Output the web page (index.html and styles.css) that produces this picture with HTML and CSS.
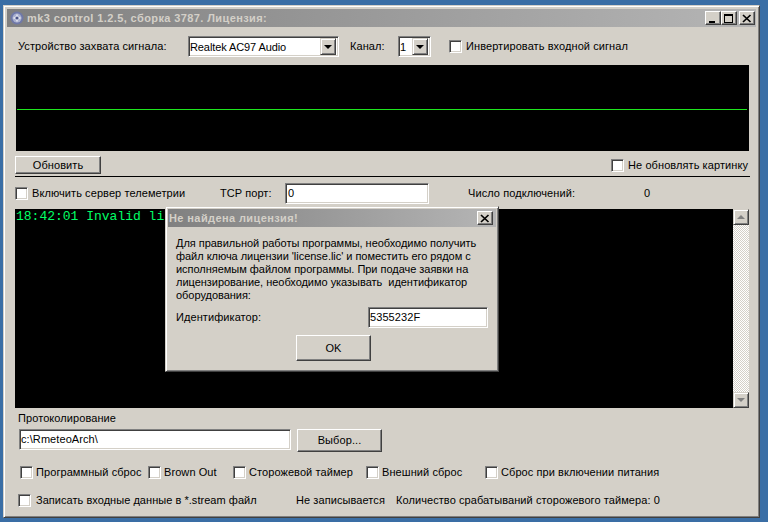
FILE: index.html
```html
<!DOCTYPE html>
<html lang="ru">
<head>
<meta charset="utf-8">
<title>mk3 control</title>
<link rel="stylesheet" href="styles.css">
</head>
<body>
<div class="window">
  <div class="titlebar">
    <svg class="app-icon" width="14" height="14" viewBox="0 0 14 14"><circle cx="7" cy="7" r="6.500" fill="#6f78a8"/><circle cx="7" cy="7" r="4.500" fill="#a9b0d0"/><path d="M7 2.500 8.200 5.600 11.500 7 8.200 8.400 7 11.500 5.800 8.400 2.500 7 5.800 5.600Z" fill="#e4e6f0"/><circle cx="7" cy="7" r="1.600" fill="#4a5488"/></svg>
    <span class="title-text">mk3 control 1.2.5, сборка 3787. Лицензия:</span>
    <div class="win-buttons">
      <button class="cap-btn"><svg width="10" height="9" viewBox="0 0 10 9"><rect x="1" y="7" width="6" height="2"/></svg></button>
      <button class="cap-btn"><svg width="10" height="9" viewBox="0 0 10 9"><path d="M0 0H9V9H0ZM1 2V8H8V2Z" fill-rule="evenodd"/></svg></button>
      <button class="cap-btn cap-close"><svg width="10" height="9" viewBox="0 0 10 9"><path d="M1 1 8.500 8M8.500 1 1 8" fill="none" stroke="#000" stroke-width="1.700"/></svg></button>
    </div>
  </div>

  <div class="row-device">
    <span class="lbl-device">Устройство захвата сигнала:</span>
    <div class="combo combo-device"><span class="combo-text">Realtek AC97 Audio</span><span class="combo-arrow"><i class="tri"></i></span></div>
    <span class="lbl-channel">Канал:</span>
    <div class="combo combo-channel"><span class="combo-text">1</span><span class="combo-arrow"><i class="tri"></i></span></div>
    <label class="check check-invert"><input type="checkbox">Инвертировать входной сигнал</label>
  </div>

  <div class="scope"><div class="scope-line"></div></div>

  <div class="row-update">
    <button class="btn btn-update">Обновить</button>
    <label class="check"><input type="checkbox">Не обновлять картинку</label>
  </div>
  <div class="separator"></div>

  <div class="row-telemetry">
    <label class="check check-server"><input type="checkbox">Включить сервер телеметрии</label>
    <span class="lbl-port">TCP порт:</span>
    <div class="field field-port">0</div>
    <span class="lbl-conn">Число подключений:</span>
    <span class="conn-value">0</span>
  </div>

  <div class="log">
    <div class="log-text">18:42:01 Invalid li</div>
    <div class="scrollbar">
      <span class="scroll-btn"><i class="tri tri-up"></i></span>
      <span class="scroll-track"></span>
      <span class="scroll-btn"><i class="tri tri-down"></i></span>
    </div>
  </div>

  <div class="lbl-log">Протоколирование</div>
  <div class="row-path">
    <div class="field field-path">c:\RmeteoArch\</div>
    <button class="btn btn-browse">Выбор...</button>
  </div>

  <div class="row-flags">
    <label class="check"><input type="checkbox">Программный сброс</label>
    <label class="check"><input type="checkbox">Brown Out</label>
    <label class="check"><input type="checkbox">Сторожевой таймер</label>
    <label class="check"><input type="checkbox">Внешний сброс</label>
    <label class="check"><input type="checkbox">Сброс при включении питания</label>
  </div>

  <div class="row-status">
    <label class="check"><input type="checkbox">Записать входные данные в *.stream файл</label>
    <span>Не записывается</span>
    <span>Количество срабатываний сторожевого таймера: 0</span>
  </div>

  <div class="dialog">
    <div class="dialog-title">
      <span class="title-text">Не найдена лицензия!</span>
      <button class="cap-btn cap-close"><svg width="10" height="9" viewBox="0 0 10 9"><path d="M1 1 8.500 8M8.500 1 1 8" fill="none" stroke="#000" stroke-width="1.700"/></svg></button>
    </div>
    <p class="dialog-text">Для правильной работы программы, необходимо получить<br>файл ключа лицензии 'license.lic' и поместить его рядом с<br>исполняемым файлом программы. При подаче заявки на<br>лицензирование, необходимо указывать &nbsp;идентификатор<br>оборудования:</p>
    <div class="dialog-id">
      <span>Идентификатор:</span>
      <div class="field field-id">5355232F</div>
    </div>
    <div class="dialog-actions"><button class="btn btn-ok">OK</button></div>
  </div>
</div>
</body>
</html>
```
FILE: styles.css
```css
* { box-sizing: border-box; }
html, body { margin: 0; padding: 0; height: 100%; overflow: hidden; }
body {
  background: #3a6ea5;
  font: 11px/13px "Liberation Sans", Arial, sans-serif;
  letter-spacing: .08px;
  color: #000;
}
.window {
  position: relative;
  width: 757px;
  height: 513px;
  margin: 5px 0 0 3px;
  padding: 3px;
  background: #d4d0c8;
  border: 1px solid;
  border-color: #d4d0c8 #404040 #404040 #d4d0c8;
  box-shadow: inset 1px 1px #fff, inset -1px -1px #808080;
}
.titlebar, .dialog-title {
  display: flex;
  align-items: center;
  background: linear-gradient(90deg, #808080, #b5b5b5);
}
.titlebar { height: 18px; padding: 0 1px 0 3px; }
.app-icon { flex: none; margin-right: 3px; }
.title-text {
  font-weight: bold;
  font-size: 11px;
  letter-spacing: .4px;
  color: #d4d0c8;
  white-space: nowrap;
}
.win-buttons { display: flex; margin-left: auto; }
.cap-btn {
  display: flex;
  align-items: center;
  justify-content: center;
  width: 16px;
  height: 14px;
  padding: 0;
  background: #d4d0c8;
  border: 1px solid;
  border-color: #fff #404040 #404040 #fff;
  box-shadow: inset -1px -1px #808080;
}
.cap-close { margin-left: 2px; }
.cap-btn svg { display: block; }

.row-device {
  display: flex;
  align-items: center;
  height: 21px;
  margin-top: 9px;
  padding-left: 11px;
}
.lbl-device { width: 170px; }
.lbl-channel { width: 48px; margin-left: 11px; }
.combo {
  display: flex;
  align-items: center;
  height: 21px;
  padding: 2px 2px 2px 1px;
  background: #fff;
  border: 1px solid;
  border-color: #808080 #fff #fff #808080;
  box-shadow: inset 1px 1px #404040, inset -1px -1px #d4d0c8;
}
.combo-device { width: 151px; }
.combo-channel { width: 33px; }
.combo-text { flex: 1; padding-top: 1px; letter-spacing: -.1px; white-space: nowrap; overflow: hidden; }
.combo-arrow {
  display: flex;
  align-items: center;
  justify-content: center;
  width: 16px;
  height: 17px;
  background: #d4d0c8;
  border: 1px solid;
  border-color: #d4d0c8 #404040 #404040 #d4d0c8;
  box-shadow: inset 1px 1px #fff, inset -1px -1px #808080;
}
.tri {
  display: block;
  width: 0;
  height: 0;
  border: 4px solid transparent;
  border-bottom-width: 0;
  border-top-color: #000;
}
.tri-up { border-width: 0 4px 4px; border-bottom-color: #808080; border-top-color: transparent; }
.tri-down { border-top-color: #808080; }

.check { display: flex; align-items: center; height: 14px; white-space: nowrap; }
.check input {
  appearance: none;
  flex: none;
  width: 13px;
  height: 13px;
  margin: 0 4px 0 0;
  background: #fff;
  border: 1px solid;
  border-color: #808080 #fff #fff #808080;
  box-shadow: inset 1px 1px #404040, inset -1px -1px #d4d0c8;
}
.check-invert { margin-left: 18px; }

.scope {
  width: 733px;
  height: 86px;
  margin: 8px 0 0 9px;
  padding: 44px 2px 0 1px;
  background: #000;
}
.scope-line { height: 1px; background: #1ee61e; }

.row-update {
  display: flex;
  align-items: center;
  justify-content: space-between;
  width: 733px;
  height: 18px;
  margin: 5px 0 0 8px;
}
.btn {
  padding: 0;
  font: inherit;
  letter-spacing: inherit;
  color: #000;
  background: #d4d0c8;
  border: 1px solid;
  border-color: #fff #404040 #404040 #fff;
  box-shadow: inset -1px -1px #808080;
}
.btn-update { width: 86px; height: 18px; }
.separator { width: 735px; height: 1px; margin: 2px 0 0 8px; background: #000; }

.row-telemetry {
  display: flex;
  align-items: center;
  height: 22px;
  margin: 5px 0 0 8px;
}
.check-server { width: 205px; }
.lbl-port { width: 65px; }
.field {
  display: flex;
  align-items: center;
  padding-left: 2px;
  background: #fff;
  border: 1px solid;
  border-color: #808080 #fff #fff #808080;
  box-shadow: inset 1px 1px #404040, inset -1px -1px #d4d0c8;
  white-space: nowrap;
}
.field-port { width: 144px; height: 21px; }
.lbl-conn { width: 176px; margin-left: 39px; }

.log {
  display: flex;
  width: 734px;
  height: 199px;
  margin: 5px 0 0 8px;
  background: #000;
}
.log-text {
  flex: 1;
  padding-left: 1px;
  font: 13px/15px "Liberation Mono", "Courier New", monospace;
  letter-spacing: 0;
  color: #00ff66;
  white-space: pre;
}
.scrollbar { display: flex; flex-direction: column; flex: none; width: 16px; }
.scroll-btn {
  display: flex;
  align-items: center;
  justify-content: center;
  flex: none;
  height: 16px;
  background: #d4d0c8;
  border: 1px solid;
  border-color: #d4d0c8 #404040 #404040 #d4d0c8;
  box-shadow: inset 1px 1px #fff, inset -1px -1px #808080;
}
.scroll-track {
  flex: 1;
  background: conic-gradient(#fff 25%, #d4d0c8 0 50%, #fff 0 75%, #d4d0c8 0) 0 0 / 2px 2px;
}

.lbl-log { height: 13px; margin: 4px 0 0 11px; }
.row-path {
  display: flex;
  align-items: flex-start;
  height: 23px;
  margin: 4px 0 0 12px;
}
.field-path { width: 272px; height: 21px; padding-left: 1px; }
.btn-browse { width: 85px; height: 23px; margin-left: 6px; }

.row-flags {
  display: grid;
  grid-template-columns: 128px 85px 133px 119px auto;
  justify-content: start;
  height: 14px;
  margin: 13px 0 0 13px;
}
.row-flags .check input { margin-right: 3px; }
.row-status {
  display: grid;
  grid-template-columns: 278px 100px auto;
  justify-content: start;
  align-items: center;
  height: 14px;
  margin: 14px 0 0 11px;
}
.row-status .check { letter-spacing: .04px; }
.row-status .check input { margin-right: 5px; }

.dialog {
  position: absolute;
  left: 161px;
  top: 200px;
  width: 334px;
  height: 166px;
  padding: 2px;
  background: #d4d0c8;
  border: 1px solid;
  border-color: #d4d0c8 #404040 #404040 #d4d0c8;
  box-shadow: inset 1px 1px #fff, inset -1px -1px #808080;
}
.dialog-title { height: 18px; padding: 0 3px 0 1px; justify-content: space-between; }
.dialog-text { margin: 10px 0 0 8px; letter-spacing: -.03px; white-space: nowrap; }
.dialog-id {
  display: flex;
  align-items: center;
  justify-content: space-between;
  height: 21px;
  margin: 5px 8px 0 8px;
}
.field-id { width: 120px; height: 21px; padding-left: 1px; }
.dialog-actions { display: flex; justify-content: center; margin-top: 7px; padding-left: 3px; }
.btn-ok { width: 75px; height: 26px; }
```
